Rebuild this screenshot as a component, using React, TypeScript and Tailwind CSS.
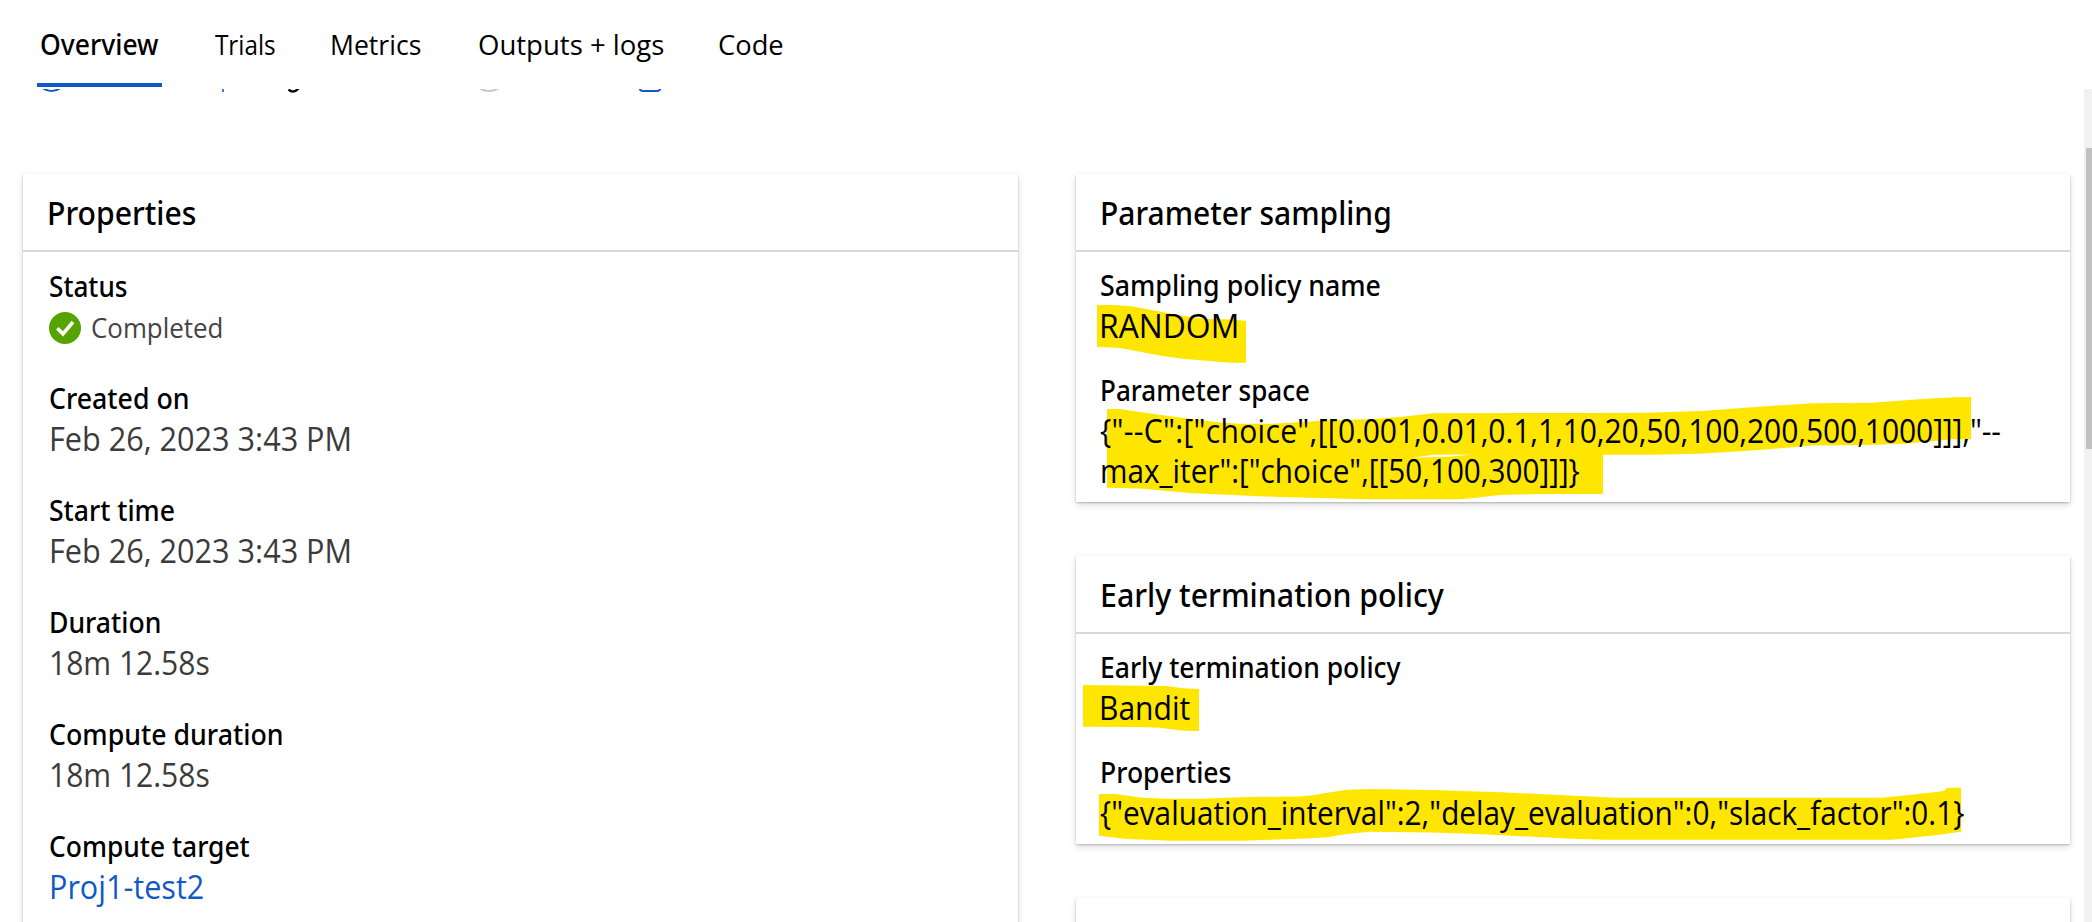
import type { ReactNode } from "react";

const REGULAR = "font-['Open_Sans','Noto_Sans',sans-serif]";
const MEDIUM = "font-['Noto_Sans','Open_Sans',sans-serif] font-medium";

function Condensed({ scale, children }: { scale: string; children: ReactNode }) {
  return <span className={`inline-block origin-left whitespace-nowrap ${scale}`}>{children}</span>;
}

const tabs = [
  { label: "Overview", width: "w-[125px]", scale: "scale-x-[0.948]", active: true },
  { label: "Trials", width: "w-[65px]", scale: "scale-x-[0.867]" },
  { label: "Metrics", width: "w-[98px]", scale: "scale-x-[0.95]" },
  { label: "Outputs + logs", width: "w-[190px]", scale: "scale-x-[0.983]" },
  { label: "Code", width: "w-[69px]", scale: "scale-x-[0.976]" },
];

function Tabs() {
  return (
    <nav className="flex h-[89px] shrink-0 gap-[50px] pl-[37px] text-[28px]">
      {tabs.map((tab) => (
        <button
          key={tab.label}
          className={`flex h-[87px] items-center border-b-4 pl-[3px] pt-[4px] text-black ${tab.width} ${
            tab.active ? `border-[#0f5bc4] ${MEDIUM}` : `border-transparent ${REGULAR}`
          }`}
        >
          <Condensed scale={tab.scale}>{tab.label}</Condensed>
        </button>
      ))}
    </nav>
  );
}

/* Lower edge of the command bar that has scrolled beneath the tabs. */
function ScrolledToolbar() {
  return (
    <svg className="block h-[5px] w-[700px] shrink-0" viewBox="0 89 700 5" fill="none" strokeWidth="2">
      <path d="M43 88.3 Q51.500 93.500 60 88.300" stroke="#0f5bc4" />
      <path d="M223 89 V92" stroke="#3f78d0" />
      <path d="M288.500 89.500 Q293.500 94 298.500 88.500" stroke="#000" strokeWidth="2.400" />
      <path d="M480 88.500 Q489 93.300 498 88.500" stroke="#c8c8c8" />
      <path d="M639.500 88 Q640 91 643 91 H657 Q660 91 660.500 88" stroke="#0f5bc4" />
    </svg>
  );
}

function Card({ title, scale, pad, className = "", children }: {
  title: string;
  scale: string;
  pad: string;
  className?: string;
  children?: ReactNode;
}) {
  return (
    <section
      className={`relative bg-white shadow-[0_3.2px_7.2px_rgba(0,0,0,0.132),0_0.6px_1.8px_rgba(0,0,0,0.22)] ${className}`}
    >
      <h2 className={`flex h-[78px] items-center border-b-2 border-[#d8d8d8] pt-[2px] text-[32px] text-black ${pad} ${MEDIUM}`}>
        <Condensed scale={scale}>{title}</Condensed>
      </h2>
      {children}
    </section>
  );
}

function Label({ scale, children }: { scale: string; children: ReactNode }) {
  return (
    <div className={`h-[41px] text-[28px] leading-[40px] text-black ${MEDIUM}`}>
      <Condensed scale={scale}>{children}</Condensed>
    </div>
  );
}

function Value({ scale, className = "", children }: { scale: string; className?: string; children: ReactNode }) {
  return (
    <div className={`h-10 text-[32px] leading-[40px] ${className} ${REGULAR}`}>
      <Condensed scale={scale}>{children}</Condensed>
    </div>
  );
}

const properties = [
  { label: "Created on", ls: "scale-x-[0.954]", value: "Feb 26, 2023 3:43 PM", vs: "scale-x-[0.957]", color: "text-[#3b3b3b]" },
  { label: "Start time", ls: "scale-x-[0.948]", value: "Feb 26, 2023 3:43 PM", vs: "scale-x-[0.957]", color: "text-[#3b3b3b]" },
  { label: "Duration", ls: "scale-x-[0.95]", value: "18m 12.58s", vs: "scale-x-[0.938]", color: "text-[#3b3b3b]" },
  { label: "Compute duration", ls: "scale-x-[0.955]", value: "18m 12.58s", vs: "scale-x-[0.938]", color: "text-[#3b3b3b]" },
  { label: "Compute target", ls: "scale-x-[0.943]", value: "Proj1-test2", vs: "scale-x-[0.955]", color: "text-[#115ac4]" },
];

function CompletedIcon() {
  return (
    <svg className="mt-0.5 size-8" viewBox="0 0 32 32" fill="none">
      <circle cx="16" cy="16" r="16" fill="#57a300" />
      <path d="M8.300 16.300 L14 21.900 L24 10" stroke="#fff" strokeWidth="3.600" />
    </svg>
  );
}

function PropertiesCard() {
  return (
    <Card title="Properties" scale="scale-x-[0.942]" pad="pl-6" className="h-[800px] w-[995px]">
      <div className="flex flex-col gap-[31px] pl-[26px] pt-[14px]">
        <div>
          <Label scale="scale-x-[0.934]">Status</Label>
          <div className={`flex h-10 items-center gap-[10px] text-[28px] text-[#444] ${REGULAR}`}>
            <CompletedIcon />
            <Condensed scale="scale-x-[0.925]">Completed</Condensed>
          </div>
        </div>
        {properties.map((p) => (
          <div key={p.label}>
            <Label scale={p.ls}>{p.label}</Label>
            <Value scale={p.vs} className={p.color}>{p.value}</Value>
          </div>
        ))}
      </div>
    </Card>
  );
}

const randomMark =
  "M1097 305 L1115 305 L1133 306.500 L1157 311 L1180 315.500 L1207 319 L1233 319.500 L1246 321 V362.700 H1230 L1183 358.700 L1162 356 L1140 351.700 L1120 348 L1097 346.700 Z";
const spaceMark =
  "M1107 409 H1120 L1143 412.500 L1193 419.300 L1220 422.500 L1240 423.700 H1273 L1320 421 L1377 418.700 L1405 416.500 L1433 413.300 L1580 413 L1649 412.700 L1705 410.700 L1759 406.700 L1812 403.300 L1872 402.700 L1922 399 L1955 397.300 L1971 397 V439.300 H1952 L1905 443.700 L1865 445 L1812 445.500 L1759 450 L1699 453.700 L1650 454.700 H1603 V494 H1540 L1500 495 L1480 497.300 L1460 499.300 H1367 L1280 497 L1193 493.300 L1140 488.500 L1107 487.700 Z M1413 457.700 L1450 456.700 L1472 454.500 L1433 454.700 Z";
const banditMark =
  "M1083 685 L1167 686 L1183 688.300 L1199 689 V731 H1190 L1177 730 L1160 727.700 L1140 727 L1083 726.700 Z";
const slackMark =
  "M1099 794 H1115 L1140 797.500 L1165 798.800 H1200 L1257 796.700 L1300 796.500 L1313 795.300 L1327 792.700 L1347 789.700 L1370 789 L1433 790 L1500 792.200 L1580 796 L1615 797.700 H1882 L1925 793.300 L1944 791 L1947 787.700 H1961 V831.700 L1935 835.300 L1892 839.700 H1605 L1572 838.700 L1477 834 L1430 832.500 L1370 831.700 L1347 834 L1327 837.300 L1300 838.700 L1240 840.700 H1173 L1127 839 L1099 835.700 Z";

function Marker({ viewBox, paths }: { viewBox: string; paths: string[] }) {
  return (
    <svg className="pointer-events-none absolute inset-0 size-full" viewBox={viewBox} preserveAspectRatio="none">
      {paths.map((d) => (
        <path key={d} d={d} fill="#ffe600" fillRule="evenodd" />
      ))}
    </svg>
  );
}

function SamplingCard() {
  return (
    <Card title="Parameter sampling" scale="scale-x-[0.937]" pad="pl-6" className="h-[328px]">
      <Marker viewBox="1076 174 994 328" paths={[randomMark, spaceMark]} />
      <div className="relative flex flex-col gap-6 pl-6 pt-[13px] text-black">
        <div>
          <Label scale="scale-x-[0.955]">Sampling policy name</Label>
          <Value scale="scale-x-[0.995]" className="-ml-px">RANDOM</Value>
        </div>
        <div>
          <Label scale="scale-x-[0.93]">Parameter space</Label>
          <Value scale="scale-x-[0.94]">
            <span className="tracking-[0.3px]">{'{"--C":["choice",[['}</span>
            <span className="tracking-[-0.13px]">{'0.001,0.01,0.1,1,10,20,50,100,200,500,1000]]],"--'}</span>
          </Value>
          <Value scale="scale-x-[0.928]">{'max_iter":["choice",[[50,100,300]]]}'}</Value>
        </div>
      </div>
    </Card>
  );
}

function TerminationCard() {
  return (
    <Card title="Early termination policy" scale="scale-x-[0.947]" pad="pl-6" className="h-[288px]">
      <Marker viewBox="1076 556 994 288" paths={[banditMark, slackMark]} />
      <div className="relative flex flex-col gap-6 pl-6 pt-[13px] text-black">
        <div>
          <Label scale="scale-x-[0.946]">Early termination policy</Label>
          <Value scale="scale-x-[0.939]" className="-ml-px">Bandit</Value>
        </div>
        <div>
          <Label scale="scale-x-[0.948]">Properties</Label>
          <Value scale="scale-x-[0.93]">{'{"evaluation_interval":2,"delay_evaluation":0,"slack_factor":0.1}'}</Value>
        </div>
      </div>
    </Card>
  );
}

export default function App() {
  return (
    <div className="flex h-[922px] w-[2092px] flex-col overflow-hidden bg-white">
      <Tabs />
      <div className="flex min-h-0 flex-1">
        <main className="flex w-[2084px] flex-col overflow-hidden">
          <ScrolledToolbar />
          <div className="flex gap-[58px] pl-[23px] pt-20">
            <PropertiesCard />
            <div className="flex w-[994px] flex-col gap-[54px]">
              <SamplingCard />
              <TerminationCard />
              <Card title="" scale="" pad="" className="h-[200px]" />
            </div>
          </div>
        </main>
        <div className="w-2 bg-[#f1f1f1] pl-0.5 pt-[59px]">
          <div className="h-[301px] w-1.5 bg-[#c1c1c1]" />
        </div>
      </div>
    </div>
  );
}
